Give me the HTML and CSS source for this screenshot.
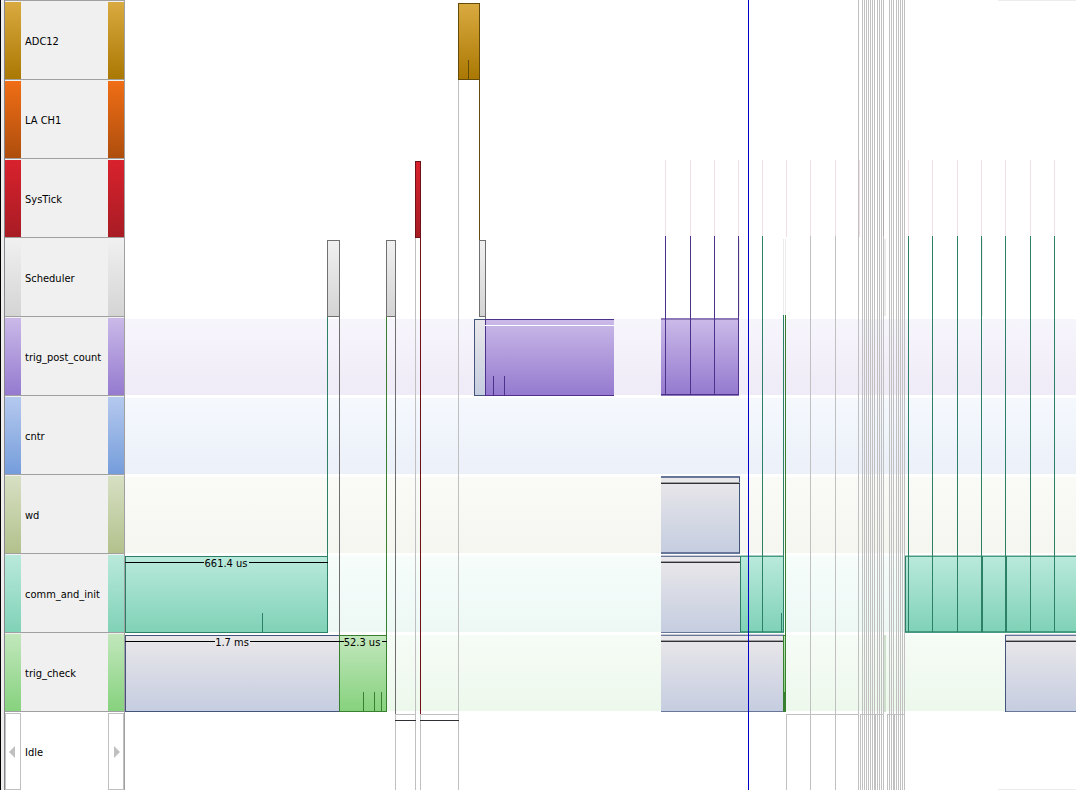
FILE: index.html
```html
<!DOCTYPE html>
<html lang="en">
<head>
<meta charset="utf-8">
<title>Timeline</title>
<link rel="stylesheet" href="styles.css">
</head>
<body>
<main class="timeline">
  <div class="gutter"></div>
  <div class="contexts">
    <div class="context adc"><span class="swatch"></span><span class="name">ADC12</span><span class="swatch"></span></div>
    <div class="context la"><span class="swatch"></span><span class="name">LA CH1</span><span class="swatch"></span></div>
    <div class="context systick"><span class="swatch"></span><span class="name">SysTick</span><span class="swatch"></span></div>
    <div class="context scheduler"><span class="swatch"></span><span class="name">Scheduler</span><span class="swatch"></span></div>
    <div class="context post"><span class="swatch"></span><span class="name">trig_post_count</span><span class="swatch"></span></div>
    <div class="context cntr"><span class="swatch"></span><span class="name">cntr</span><span class="swatch"></span></div>
    <div class="context wd"><span class="swatch"></span><span class="name">wd</span><span class="swatch"></span></div>
    <div class="context comm"><span class="swatch"></span><span class="name">comm_and_init</span><span class="swatch"></span></div>
    <div class="context check"><span class="swatch"></span><span class="name">trig_check</span><span class="swatch"></span></div>
    <div class="context idle">
      <button class="step prev" type="button" aria-label="Previous"><svg width="6" height="12"><path d="M6 0V12L0 6Z"/></svg></button>
      <span class="name">Idle</span>
      <button class="step next" type="button" aria-label="Next"><svg width="6" height="12"><path d="M0 0V12L6 6Z"/></svg></button>
    </div>
  </div>
  <div class="plot">
    <div class="lane"></div>
    <div class="lane"></div>
    <div class="lane"></div>
    <div class="lane"></div>
    <div class="lane post"></div>
    <div class="lane cntr"></div>
    <div class="lane wd"></div>
    <div class="lane comm"></div>
    <div class="lane check"></div>
    <div class="lane"></div>
    <svg class="trace" role="img" aria-label="Context activity over time">
      <defs>
        <linearGradient id="gold" x2="0" y2="1"><stop stop-color="#d9aa40"/><stop offset="1" stop-color="#aa7803"/></linearGradient>
        <linearGradient id="red" x2="0" y2="1"><stop stop-color="#d8222d"/><stop offset="1" stop-color="#a81c24"/></linearGradient>
        <linearGradient id="gray" x2="0" y2="1"><stop stop-color="#f0f0f0"/><stop offset="1" stop-color="#d4d4d4"/></linearGradient>
        <linearGradient id="purple" x2="0" y2="1"><stop stop-color="#cab9e8"/><stop offset="1" stop-color="#957acf"/></linearGradient>
        <linearGradient id="teal" x2="0" y2="1"><stop stop-color="#b9e9db"/><stop offset="1" stop-color="#80d2b7"/></linearGradient>
        <linearGradient id="green" x2="0" y2="1"><stop stop-color="#c2e7bc"/><stop offset="1" stop-color="#86d27e"/></linearGradient>
        <linearGradient id="slate" x2="0" y2="1"><stop stop-color="#eae8ea"/><stop offset="1" stop-color="#c5cde0"/></linearGradient>
      </defs>
      <g transform="translate(-125 0)">
        <!-- faint interrupt traces -->
        <path class="pink" d="M665 160h1v76h-1zM690 160h1v76h-1zM714 160h1v76h-1zM738 160h1v76h-1zM762 160h1v76h-1zM786 160h1v77h-1zM810 160h1v76h-1zM835 160h1v76h-1zM859 160h1v77h-1zM908 160h1v76h-1zM932 160h1v76h-1zM957 160h1v76h-1zM981 160h1v76h-1zM1005 160h1v76h-1zM1030 160h1v76h-1zM1054 160h1v76h-1z"/>
        <path class="faint" d="M739 239h1v77h-1zM783 239h1v76h-1zM785 239h1v76h-1zM884 239h2v77h-2zM982 239h1v77h-1zM998 0h2000v1h-2000zM998 789h2000v1h-2000z"/>
        <path class="green-tint" d="M883 635h3v77h-3z"/>

        <!-- idle transitions -->
        <path class="light" d="M395 714h1v76h-1zM415 238h1v552h-1zM420 714h1v76h-1zM458 80h1v710h-1zM395 714h21v1h-21zM420 714h39v1h-39z"/>
        <path class="light" d="M786 714h1v76h-1zM786 714h73v1h-73zM860 714h24v1h-24zM887 714h18v1h-18zM810 236h1v554h-1zM835 236h1v554h-1z"/>
        <path class="light" d="M858 0h1v790h-1zM862 0h1v790h-1zM864 0h1v790h-1zM866 0h1v790h-1zM868 0h1v790h-1zM870 0h1v790h-1zM872 0h1v790h-1zM874 0h1v790h-1zM877 0h1v790h-1zM879 0h1v790h-1zM881 0h1v790h-1zM883 0h1v790h-1z"/>
        <path class="light" d="M889 0h1v790h-1zM891 0h1v790h-1zM893 0h1v790h-1zM896 0h1v790h-1zM898 0h1v790h-1zM900 0h1v790h-1zM902 0h1v790h-1zM904 0h1v790h-1z"/>
        <path class="light" d="M860 714h1v76h-1zM875 714h1v76h-1zM887 714h1v76h-1zM894 714h1v76h-1z"/>
        <path class="rose" d="M883 160h1v76h-1z"/>
        <path class="dark" d="M395 720h21v1h-21zM420 720h39v1h-39z"/>

        <!-- ADC12 -->
        <path class="gold-line" d="M458 3h22v77h-22zM479 80h1v160h-1z"/>
        <rect x="459" y="4" width="20" height="75" fill="url(#gold)"/>
        <path class="gold-line" d="M468 60h1v19h-1z"/>

        <!-- SysTick -->
        <path class="red-line" d="M415 161h6v77h-6zM420 238h1v476h-1z"/>
        <rect x="416" y="162" width="4" height="75" fill="url(#red)"/>

        <!-- Scheduler -->
        <path class="gray-line" d="M327 240h13v77h-13zM386 240h10v77h-10zM479 240h7v77h-7zM339 317h1v318h-1zM395 317h1v397h-1zM485 317h1v2h-1z"/>
        <rect x="328" y="241" width="11" height="75" fill="url(#gray)"/>
        <rect x="387" y="241" width="8" height="75" fill="url(#gray)"/>
        <rect x="480" y="241" width="5" height="75" fill="url(#gray)"/>

        <!-- trig_post_count -->
        <rect class="slate-line" x="474" y="319" width="12" height="77"/>
        <rect x="475" y="320" width="10" height="75" fill="url(#slate)"/>
        <rect class="purple-line" x="485" y="319" width="129" height="77"/>
        <rect x="486" y="320" width="128" height="75" fill="url(#purple)"/>
        <path class="white" d="M485 325h129v1h-129z"/>
        <path class="purple-line" d="M493 376h1v19h-1zM504 376h1v19h-1z"/>
        <rect class="purple-edge" x="661" y="318" width="78" height="78"/>
        <rect x="661" y="320" width="77" height="74" fill="url(#purple)"/>
        <path class="purple-line" d="M665 236h1v159h-1zM690 236h1v159h-1zM714 236h1v159h-1zM738 236h1v159h-1zM661 394h78v1h-78z"/>

        <!-- wd -->
        <rect class="slate-edge" x="661" y="476" width="79" height="78"/>
        <rect x="661" y="478" width="78" height="74" fill="url(#slate)"/>
        <path class="slate-line" d="M739 477h1v76h-1z"/>
        <path class="mid" d="M661 482h79v1h-79z"/>
        <path class="dark" d="M661 483h79v1h-79z"/>

        <!-- comm_and_init -->
        <rect class="teal-line" x="125" y="556" width="203" height="77"/>
        <rect x="126" y="557" width="201" height="75" fill="url(#teal)"/>
        <path class="teal-line" d="M262 613h1v19h-1zM327 317h1v240h-1z"/>
        <rect class="slate-pale" x="661" y="555" width="79" height="78"/>
        <rect class="slate-edge" x="661" y="556" width="79" height="77"/>
        <rect x="661" y="557" width="79" height="75" fill="url(#slate)"/>
        <path class="mid" d="M661 561h79v1h-79z"/>
        <path class="dark" d="M661 562h79v1h-79z"/>
        <rect class="teal-pale" x="740" y="555" width="44" height="78"/>
        <rect class="teal-edge" x="740" y="556" width="44" height="77"/>
        <rect x="741" y="557" width="42" height="74" fill="url(#teal)"/>
        <path class="teal-line" d="M740 556h1v76h-1zM762 236h1v396h-1zM781 613h1v19h-1zM783 315h1v317h-1z"/>
        <rect class="teal-pale" x="905" y="555" width="2000" height="78"/>
        <rect class="teal-edge" x="905" y="556" width="2000" height="77"/>
        <rect x="906" y="557" width="2000" height="74" fill="url(#teal)"/>
        <path class="teal-line" d="M905 556h1v76h-1zM908 236h1v396h-1zM932 236h1v396h-1zM957 236h1v396h-1zM981 236h1v396h-1zM982 556h1v76h-1zM1005 236h1v396h-1zM1006 556h1v76h-1zM1030 236h1v396h-1zM1054 236h1v396h-1z"/>

        <!-- trig_check -->
        <rect class="slate-line" x="125" y="635" width="215" height="77"/>
        <rect x="126" y="636" width="213" height="75" fill="url(#slate)"/>
        <rect class="green-line" x="339" y="635" width="48" height="77"/>
        <rect x="340" y="636" width="46" height="75" fill="url(#green)"/>
        <path class="green-line" d="M363 692h1v19h-1zM374 692h1v19h-1zM381 692h1v19h-1zM386 317h1v395h-1z"/>
        <rect class="slate-pale" x="661" y="634" width="123" height="77"/>
        <rect class="slate-edge" x="661" y="635" width="123" height="77"/>
        <rect x="661" y="636" width="122" height="75" fill="url(#slate)"/>
        <path class="mid" d="M661 640h122v1h-122z"/>
        <path class="dark" d="M661 641h122v1h-122z"/>
        <path class="green-line" d="M783 635h3v77h-3zM785 315h1v320h-1z"/>
        <rect x="784" y="636" width="1" height="56" fill="url(#green)"/>
        <rect class="slate-pale" x="1005" y="634" width="2000" height="78"/>
        <rect class="slate-edge" x="1005" y="635" width="2000" height="77"/>
        <rect x="1006" y="636" width="2000" height="75" fill="url(#slate)"/>
        <path class="slate-line" d="M1005 635h1v77h-1z"/>
        <path class="mid" d="M1006 640h2000v1h-2000z"/>
        <path class="dark" d="M1006 641h2000v1h-2000z"/>

        <!-- durations -->
        <path class="black" d="M125 562h79v1h-79zM249 562h79v1h-79zM125 641h90v1h-90zM250 641h94v1h-94zM382 641h5v1h-5z"/>
        <text x="226" y="567">661.4 us</text>
        <text x="232" y="646">1.7 ms</text>
        <text x="362" y="646">52.3 us</text>

        <!-- cursor -->
        <path class="cursor" d="M748 0h1v790h-1z"/>
      </g>
    </svg>
  </div>
</main>
</body>
</html>
```

FILE: styles.css
```css
body {
  margin: 0;
  background: #fff;
  color: #000;
  font: 11px/14px "DejaVu Sans Condensed", "Noto Sans", sans-serif;
}

.timeline {
  display: grid;
  grid-template-columns: 4px 121px 1fr;
}

.gutter {
  background: #f0eded;
  border-left: 1px solid #000;
}

.contexts {
  border-left: 1px solid #85868e;
  border-right: 1px solid #a0a0a0;
}

.context {
  --top: #f0f0f0;
  --bottom: #d4d4d4;
  box-sizing: border-box;
  height: 79px;
  display: grid;
  grid-template-columns: 16px 1fr 16px;
  padding-top: 1px;
  border-top: 1px solid #a0a0a0;
  background: #f0f0f0;
}

.name {
  align-self: center;
  padding: 2px 0 0 4px;
  white-space: nowrap;
}

.swatch { background: linear-gradient(var(--top), var(--bottom)); }

.context.adc { --top: #d9aa40; --bottom: #aa7803; }
.context.la { --top: #f06e16; --bottom: #ae4e0d; }
.context.systick { --top: #d8222d; --bottom: #a81c24; }
.context.post { --top: #cab9e8; --bottom: #957acf; }
.context.cntr { --top: #b5c9ee; --bottom: #759ddb; }
.context.wd { --top: #d7e0c3; --bottom: #b2c18c; }
.context.comm { --top: #b9e9db; --bottom: #80d2b7; }
.context.check { --top: #c2e7bc; --bottom: #86d27e; }
.context.idle { background: #fff; }

.step {
  display: flex;
  align-items: center;
  justify-content: center;
  padding: 0;
  border: 1px solid #c0c0c0;
  background: #fff;
  fill: #c0c0c0;
}

.step.prev { padding-right: 2px; }
.step.next { padding-left: 2px; }

.plot {
  position: relative;
  overflow: hidden;
}

.lane {
  box-sizing: border-box;
  height: 79px;
  padding-top: 3px;
  background: linear-gradient(var(--top, #fff), var(--bottom, #fff)) content-box;
}

.lane.post { --top: #f7f5fc; --bottom: #efebf7; }
.lane.cntr { --top: #f5f9fe; --bottom: #ebf0f9; }
.lane.wd { --top: #fafbf7; --bottom: #f5f6f0; }
.lane.comm { --top: #f6fdfb; --bottom: #edf8f5; }
.lane.check { --top: #f6fcf6; --bottom: #edf8ec; }

.trace {
  position: absolute;
  inset: 0;
  width: 100%;
  height: 100%;
}

.trace text { text-anchor: middle; }

.pink { fill: #f0e0e4; }
.faint { fill: #ececec; }
.green-tint { fill: #cfe0cf; }
.light { fill: #c0c0c0; }
.rose { fill: #b3a8ab; }
.mid { fill: #a0a0a4; }
.dark { fill: #303034; }
.black { fill: #000; }
.white { fill: #fff; }
.cursor { fill: #0000c8; }

.gold-line { fill: #644b0a; }
.red-line { fill: #6e1016; }
.gray-line { fill: #707070; }
.purple-line { fill: #4d318c; }
.purple-edge { fill: #8d78b8; }
.slate-line { fill: #44557a; }
.slate-edge { fill: #68769a; }
.slate-pale { fill: #c9ccd6; }
.teal-line { fill: #2b8066; }
.teal-edge { fill: #459b80; }
.teal-pale { fill: #a8cec2; }
.green-line { fill: #38802f; }
```
